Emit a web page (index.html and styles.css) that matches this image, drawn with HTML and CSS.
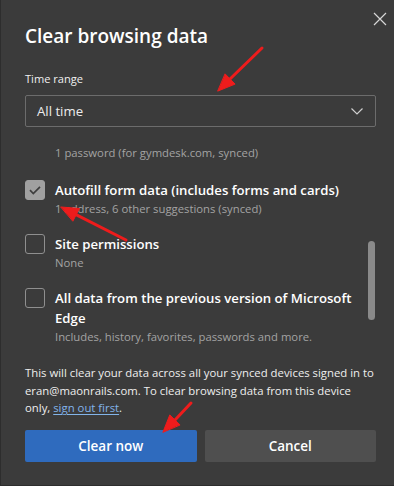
FILE: index.html
```html
<!DOCTYPE html>
<html lang="en">
<head>
<meta charset="utf-8">
<title>Clear browsing data</title>
<link rel="stylesheet" href="styles.css">
</head>
<body>
<div class="dialog">
  <div class="header">
    <h1 class="title">Clear browsing data</h1>
    <button class="close" aria-label="Close">
      <svg width="14" height="14" viewBox="0 0 14 14"><path d="M1 1L13 13M13 1L1 13" stroke="#d6d6d6" stroke-width="1.2" fill="none"/></svg>
    </button>
  </div>
  <div class="field-label">Time range</div>
  <div class="select">
    <span>All time</span>
    <svg width="12" height="7" viewBox="0 0 12 7"><path d="M0.5 0.5L6 6L11.5 0.5" stroke="#cfcfcf" stroke-width="1.2" fill="none"/></svg>
  </div>
  <div class="list-wrap">
    <div class="list">
      <div class="item-desc lead">1 password (for gymdesk.com, synced)</div>
      <div class="item">
        <span class="box checked">
          <svg width="20" height="20" viewBox="0 0 20 20"><path d="M5 10.2L8.3 13.5L15 6.8" stroke="#3d3d3d" stroke-width="1.7" fill="none"/></svg>
        </span>
        <div class="item-title">Autofill form data (includes forms and cards)</div>
        <div class="item-desc">1 address, 6 other suggestions (synced)</div>
      </div>
      <div class="item">
        <span class="box"></span>
        <div class="item-title">Site permissions</div>
        <div class="item-desc">None</div>
      </div>
      <div class="item">
        <span class="box"></span>
        <div class="item-title">All data from the previous version of Microsoft Edge</div>
        <div class="item-desc">Includes, history, favorites, passwords and more.</div>
      </div>
    </div>
    <div class="scrollbar"><div class="thumb"></div></div>
  </div>
  <p class="note">This will clear your data across all your synced devices signed in to eran@maonrails.com. To clear browsing data from this device <span class="nowrap">only, <a href="#" class="link">sign out first</a>.</span></p>
  <div class="actions">
    <button class="btn primary">Clear now</button>
    <button class="btn">Cancel</button>
  </div>
</div>
<svg class="annotations" width="394" height="486" viewBox="0 0 394 486">
  <g fill="#ee1c1c" stroke="#ee1c1c" stroke-linecap="round" stroke-linejoin="round">
    <line x1="262" y1="48" x2="230" y2="79" stroke-width="3"/>
    <polygon points="218,91 235.1,84.1 225.3,74.1" stroke-width="1"/>
    <line x1="126" y1="240" x2="76" y2="214.7" stroke-width="3"/>
    <polygon points="61,207 79.4,208.5 73,220.9" stroke-width="1"/>
    <line x1="191" y1="403" x2="175" y2="420" stroke-width="3"/>
    <polygon points="163,432 169.8,414.9 179.8,424.7" stroke-width="1"/>
  </g>
</svg>
</body>
</html>
```

FILE: styles.css
```css
* { box-sizing: border-box; }
html, body { margin: 0; padding: 0; }
body {
  background: #3b3b3b;
  font-family: "Open Sans", "Noto Sans", sans-serif;
  color: #ffffff;
  width: 394px;
  height: 486px;
  overflow: hidden;
  position: relative;
}
.dialog {
  height: 486px;
  border-left: 1px solid #2d2d2d;
  border-bottom: 1px solid #2d2d2d;
  padding: 22px 18px 0 24px;
  display: flex;
  flex-direction: column;
}
.header {
  display: flex;
  align-items: flex-start;
  justify-content: space-between;
}
.title {
  margin: 0;
  font-size: 19px;
  font-weight: 600;
  line-height: 28px;
}
.close {
  margin: -10px -11px 0 0;
  width: 14px;
  height: 14px;
  padding: 0;
  border: 0;
  background: none;
  display: flex;
}
.field-label {
  margin-top: 20px;
  font-size: 11.1px;
  line-height: 18px;
  color: #f0f0f0;
}
.select {
  margin-top: 7px;
  height: 32px;
  border: 1px solid #6c6c6c;
  border-radius: 2px;
  display: flex;
  align-items: center;
  justify-content: space-between;
  padding: 0 12px 0 11px;
  font-size: 13.2px;
  color: #ececec;
}
.list-wrap {
  margin-top: 9px;
  height: 218px;
  display: flex;
  overflow: hidden;
}
.list {
  flex: 1;
  padding-top: 8px;
  display: flex;
  flex-direction: column;
  gap: 16px;
}
.lead { padding-left: 30px; margin-bottom: 2px; }
.item {
  display: grid;
  grid-template-columns: 20px 1fr;
  column-gap: 10px;
}
.box {
  grid-row: span 2;
  width: 20px;
  height: 20px;
  border: 1px solid #8f8f8f;
  border-radius: 3px;
  display: flex;
}
.box.checked {
  background: #a0a0a0;
  border-color: #a0a0a0;
}
.box.checked svg { margin: -1px; }
.item-title {
  font-size: 13.2px;
  font-weight: 600;
  line-height: 20px;
  color: #ffffff;
}
.item-desc {
  font-size: 11.3px;
  line-height: 18px;
  color: #a3a3a3;
}
.item .item-desc { grid-column: 2; }
.scrollbar {
  width: 7px;
  margin-right: 1px;
  padding-top: 105px;
}
.thumb {
  height: 79px;
  background: #8a8a8a;
  border-radius: 4px;
}
.note {
  margin: 10px 0 0;
  font-size: 11.35px;
  line-height: 17.5px;
  color: #eeeeee;
}
.nowrap { white-space: nowrap; }
.link {
  color: #82b4ea;
  text-decoration: underline;
  text-underline-offset: 2px;
}
.actions {
  margin-top: 13px;
  display: flex;
  gap: 8px;
}
.btn {
  flex: 1;
  height: 32px;
  border: 0;
  border-radius: 2px;
  background: #4f4f4f;
  color: #ffffff;
  font-family: inherit;
  font-size: 13.5px;
  font-weight: 600;
}
.btn.primary { background: #2f6bbe; }
.annotations {
  position: absolute;
  top: 0;
  left: 0;
  pointer-events: none;
}
```
